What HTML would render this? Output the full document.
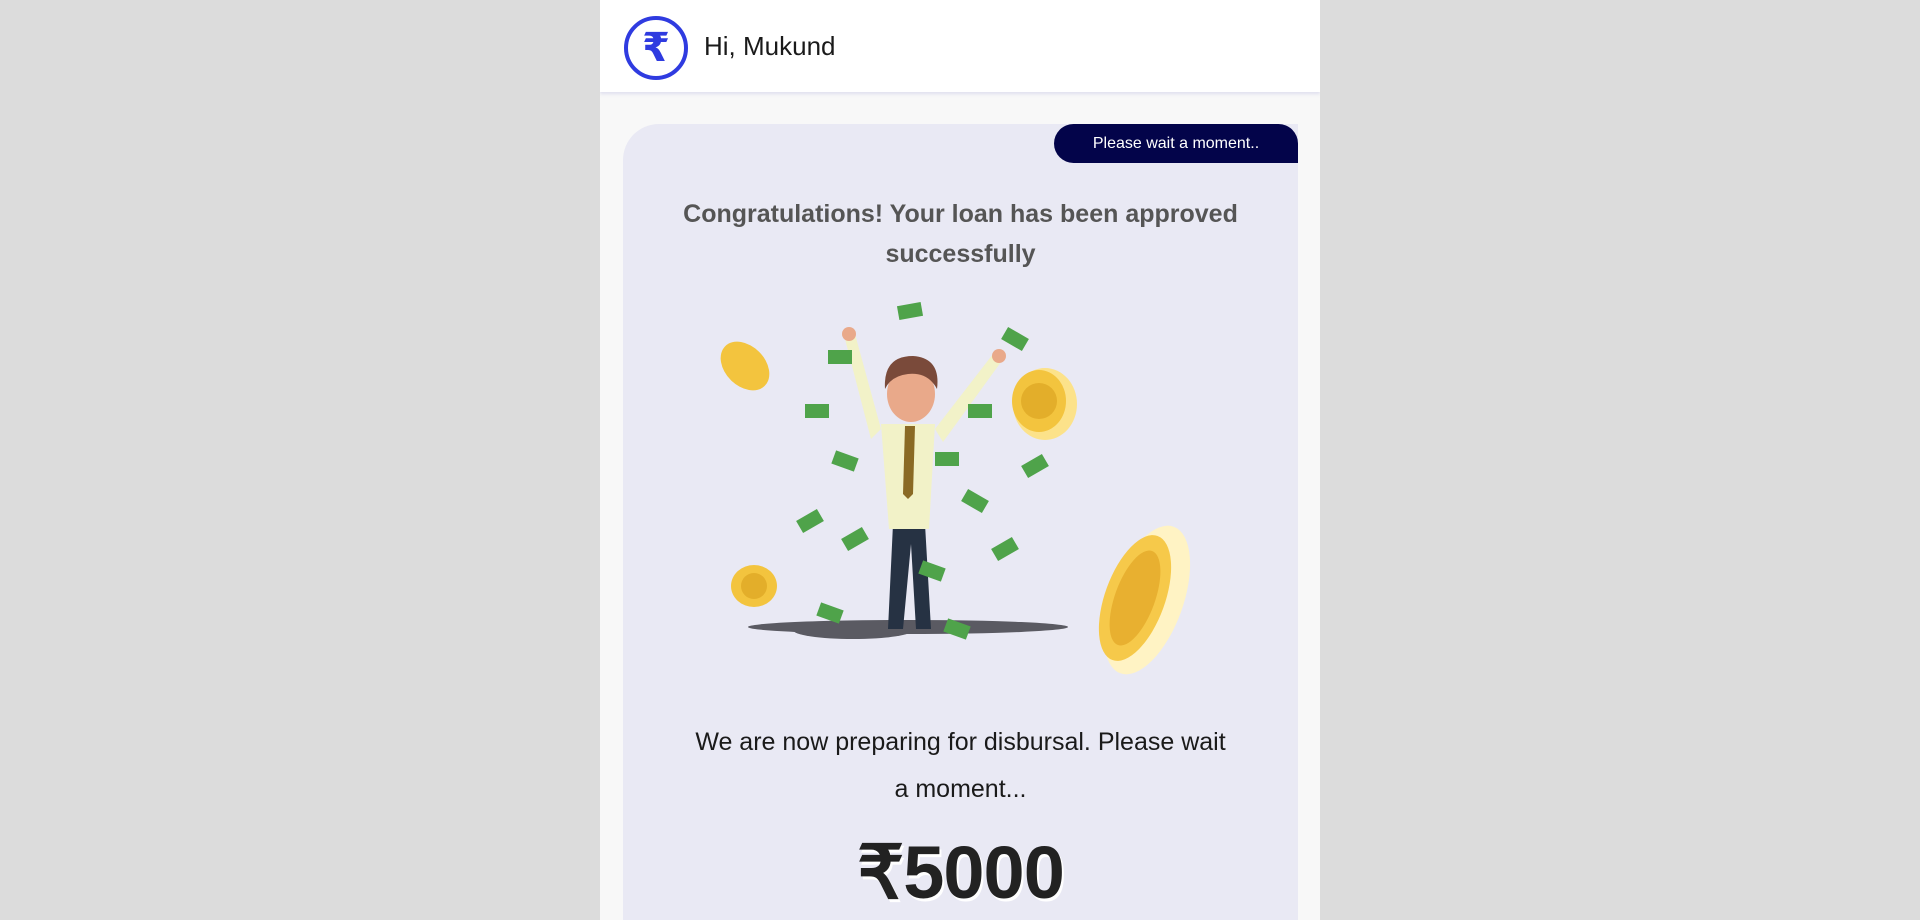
<!DOCTYPE html>
<html><head><meta charset="utf-8"><style>
html,body{margin:0;padding:0;width:1920px;height:920px;overflow:hidden;background:#dcdcdc;font-family:"Liberation Sans",sans-serif}
.col{position:absolute;left:600px;top:0;width:720px;height:920px;background:#f8f8f8;overflow:hidden}
.hdr{position:absolute;left:0;top:0;width:720px;height:92px;background:#fff;box-shadow:0 2px 3px rgba(200,200,230,.5)}
.logo{position:absolute;left:23px;top:15px}
.hi{position:absolute;left:104px;top:31px;font-size:26px;color:#1a1a1a}
.card{position:absolute;left:23px;top:124px;width:675px;height:796px;background:#e9e9f4;border-radius:36px 0 0 0}
.badge{position:absolute;right:0;top:0;width:244px;height:39px;background:#03044a;color:#fff;font-size:16px;line-height:39px;text-align:center;border-radius:26px 26px 0 26px}
.t1{position:absolute;left:0;width:675px;top:70px;text-align:center;font-size:25px;font-weight:bold;color:#555;line-height:40px}
.t2{position:absolute;left:0;width:675px;top:595px;text-align:center;font-size:25px;color:#1a1a1a;line-height:47px}
.amt{position:absolute;left:0;width:675px;top:706px;text-align:center;font-size:74px;font-weight:bold;color:#222;text-shadow:2px 3px 0 #fff;letter-spacing:-1px}
</style></head><body>
<div class="col">
 <div class="hdr">
  <svg class="logo" width="66" height="66" viewBox="0 0 66 66"><circle cx="33" cy="33" r="30" fill="#fff" stroke="#2f3be0" stroke-width="4"/><text x="33" y="46" text-anchor="middle" font-size="40" font-weight="bold" fill="#2f3be0" font-family="DejaVu Sans">₹</text></svg>
  <div class="hi">Hi, Mukund</div>
 </div>
 <div class="card">
  <div class="badge">Please wait a moment..</div>
  <div class="t1">Congratulations! Your loan has been approved<br>successfully</div>
  <svg style="position:absolute;left:0;top:170px" width="675" height="420" viewBox="0 0 675 420">
   <ellipse cx="285" cy="333" rx="160" ry="7" fill="#5a5a62"/>
   <ellipse cx="230" cy="336" rx="60" ry="9" fill="#5a5a62"/>
   <path d="M270 230 L265 335 L280 335 L288 250 L293 335 L308 335 L302 230Z" fill="#263243"/>
   <path d="M258 130 L312 130 L306 235 L266 235Z" fill="#f2f2c8"/>
   <path d="M258 135 L232 40 L222 45 L248 145Z" fill="#f2f2c8"/>
   <path d="M312 135 L370 60 L378 68 L320 148Z" fill="#f2f2c8"/>
   <path d="M282 132 L292 132 L290 200 L285 205 L280 200Z" fill="#8a6a25"/>
   <ellipse cx="288" cy="100" rx="24" ry="28" fill="#e9a98a"/>
   <path d="M262 95 Q260 62 290 62 Q318 64 314 95 Q305 78 285 80 Q268 82 262 95Z" fill="#7a4a3a"/>
   <circle cx="226" cy="40" r="7" fill="#e9a98a"/><circle cx="376" cy="62" r="7" fill="#e9a98a"/>
   <ellipse cx="524" cy="306" rx="36" ry="78" transform="rotate(20 524 306)" fill="#fff3c4"/>
   <ellipse cx="512" cy="304" rx="30" ry="66" transform="rotate(20 512 304)" fill="#f6c94a"/>
   <ellipse cx="512" cy="304" rx="20" ry="50" transform="rotate(20 512 304)" fill="#e8b030"/>
   <ellipse cx="422" cy="110" rx="32" ry="36" fill="#fce28a"/>
   <ellipse cx="416" cy="107" rx="27" ry="31" fill="#f3c43e"/>
   <circle cx="416" cy="107" r="18" fill="#e3ae2a"/>
   <ellipse cx="122" cy="72" rx="20" ry="28" transform="rotate(-45 122 72)" fill="#f3c43e"/>
   <ellipse cx="131" cy="292" rx="23" ry="21" fill="#f3c43e"/>
   <circle cx="131" cy="292" r="13" fill="#e3ae2a"/>
   <g fill="#4fa34a">
    <rect x="275" y="10" width="24" height="14" transform="rotate(-10 287 17)"/>
    <rect x="205" y="56" width="24" height="14"/>
    <rect x="380" y="38" width="24" height="14" transform="rotate(30 392 45)"/>
    <rect x="182" y="110" width="24" height="14"/>
    <rect x="345" y="110" width="24" height="14"/>
    <rect x="210" y="160" width="24" height="14" transform="rotate(20 222 167)"/>
    <rect x="312" y="158" width="24" height="14"/>
    <rect x="400" y="165" width="24" height="14" transform="rotate(-30 412 172)"/>
    <rect x="175" y="220" width="24" height="14" transform="rotate(-30 187 227)"/>
    <rect x="340" y="200" width="24" height="14" transform="rotate(30 352 207)"/>
    <rect x="220" y="238" width="24" height="14" transform="rotate(-30 232 245)"/>
    <rect x="370" y="248" width="24" height="14" transform="rotate(-30 382 255)"/>
    <rect x="297" y="270" width="24" height="14" transform="rotate(20 309 277)"/>
    <rect x="195" y="312" width="24" height="14" transform="rotate(20 207 319)"/>
    <rect x="322" y="328" width="24" height="14" transform="rotate(20 334 335)"/>
   </g>
  </svg>
  <div class="t2">We are now preparing for disbursal. Please wait<br>a moment...</div>
  <div class="amt">₹5000</div>
 </div>
</div>
</body></html>
